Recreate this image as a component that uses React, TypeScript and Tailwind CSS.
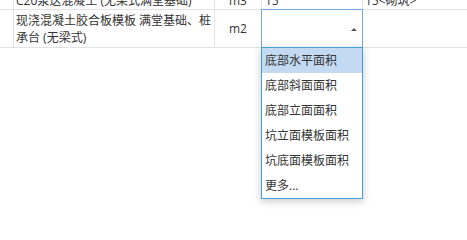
import { useState } from "react";

const options = [
  "底部水平面积",
  "底部斜面面积",
  "底部立面面积",
  "坑立面模板面积",
  "坑底面模板面积",
  "更多...",
];

export default function App() {
  const [active] = useState(0);

  return (
    <div className="w-[467px] h-[228px] overflow-hidden bg-white text-[12px] leading-[17px] text-[#333] font-['Open_Sans','Noto_Sans_CJK_SC',sans-serif]">
      <div className="-mt-[8px]">
        {/* first row, mostly scrolled out of view */}
        <div className="flex h-[18px] border-b border-[#e2e2e2]">
          <div className="w-[14px] shrink-0 border-r border-[#e2e2e2]"></div>
          <div className="w-[201px] shrink-0 border-r border-[#e2e2e2] pl-[2px] flex items-center whitespace-nowrap overflow-hidden">
            C20泵送混凝土 (无梁式满堂基础)
          </div>
          <div className="w-[47px] shrink-0 border-r border-[#e2e2e2] flex items-center justify-center">
            m3
          </div>
          <div className="w-[101px] shrink-0 border-r border-[#e2e2e2] pl-[3px] flex items-center">
            15
          </div>
          <div className="flex-1 pl-[2px] flex items-center">15&lt;砌筑&gt;</div>
        </div>

        {/* current row */}
        <div className="flex h-[38px] border-b border-[#e2e2e2]">
          <div className="w-[14px] shrink-0 border-r border-[#e2e2e2]"></div>
          <div className="w-[201px] shrink-0 border-r border-[#e2e2e2] pl-[2px] flex items-center">
            现浇混凝土胶合板模板 满堂基础、桩承台 (无梁式)
          </div>
          <div className="w-[47px] shrink-0 border-r border-[#e2e2e2] flex items-center justify-center">
            m2
          </div>
          <div className="w-[101px] shrink-0 border-r border-[#e2e2e2] relative">
            <div className="absolute -inset-px border border-[#6ea8dc] bg-white z-10">
              <span className="absolute right-[5px] top-[18px] w-0 h-0 border-x-[3px] border-b-[3px] border-x-transparent border-b-[#555]"></span>
              <ul className="absolute top-full -left-px -right-px border border-[#45a2d8] bg-white shadow-[0_2px_8px_rgba(0,0,0,0.22)]">
                {options.map((o, i) => (
                  <li
                    key={o}
                    className={`h-[25px] pl-[3px] flex items-center whitespace-nowrap ${
                      i === active ? "bg-[#c3daf2]" : ""
                    }`}
                  >
                    {o}
                  </li>
                ))}
              </ul>
            </div>
          </div>
          <div className="flex-1"></div>
        </div>
      </div>
    </div>
  );
}
